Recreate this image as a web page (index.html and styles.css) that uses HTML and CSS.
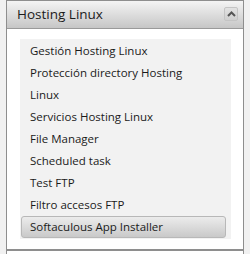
FILE: index.html
```html
<!DOCTYPE html>
<html lang="es">
<head>
  <meta charset="UTF-8" />
  <title>Hosting Linux</title>
  <link rel="stylesheet" href="styles.css">
</head>
<body>
  <div class="panel">
    <div class="panel-head">
      <span class="panel-title">Hosting Linux</span>
      <button class="collapse-btn" aria-label="Cerrar">
        <svg width="9" height="6" viewBox="0 0 9 6"><path d="M1 5 L4.5 1.5 L8 5" fill="none" stroke="#555" stroke-width="2"/></svg>
      </button>
    </div>
    <div class="panel-body">
      <ul class="menu">
        <li>Gestión Hosting Linux</li>
        <li>Protección directory Hosting</li>
        <li>Linux</li>
        <li>Servicios Hosting Linux</li>
        <li>File Manager</li>
        <li>Scheduled task</li>
        <li>Test FTP</li>
        <li>Filtro accesos FTP</li>
        <li class="active">Softaculous App Installer</li>
      </ul>
    </div>
  </div>
  <div class="panel next"></div>
</body>
</html>
```

FILE: styles.css
```css
*,*::before,*::after{box-sizing:border-box;margin:0;padding:0}
body{background:#f1f1f1;font-family:'Open Sans','Noto Sans',sans-serif;color:#1a1a1a}
.panel{margin-left:6px;width:238px;border:1px solid #8e8e8e;background:#fff}
.panel-head{height:28px;display:flex;align-items:center;justify-content:space-between;padding:0 5px 1px 10px;background:linear-gradient(#f4f4f4,#c6c6c6);border-bottom:1px solid #9a9a9a}
.panel-title{font-size:13.5px;color:#1c1c1c}
.collapse-btn{width:14px;height:14px;display:flex;align-items:center;justify-content:center;border:1px solid #c4c4c4;border-radius:2px;background:linear-gradient(#e2e2e2,#cfcfcf)}
.panel-body{padding:10px 12px 10px 13px}
.menu{list-style:none;background:#f2f2f2;padding:1px 0 1px}
.menu li{height:22px;line-height:22px;font-size:11.5px;padding-left:9px;margin:0 5px 0 1px}
.menu li.active{background:linear-gradient(#ececec,#c9c9c9);border:1px solid #b8b8b8;border-radius:3px;padding-left:8px;line-height:20px}
.panel.next{height:10px;border-bottom:none}
```
